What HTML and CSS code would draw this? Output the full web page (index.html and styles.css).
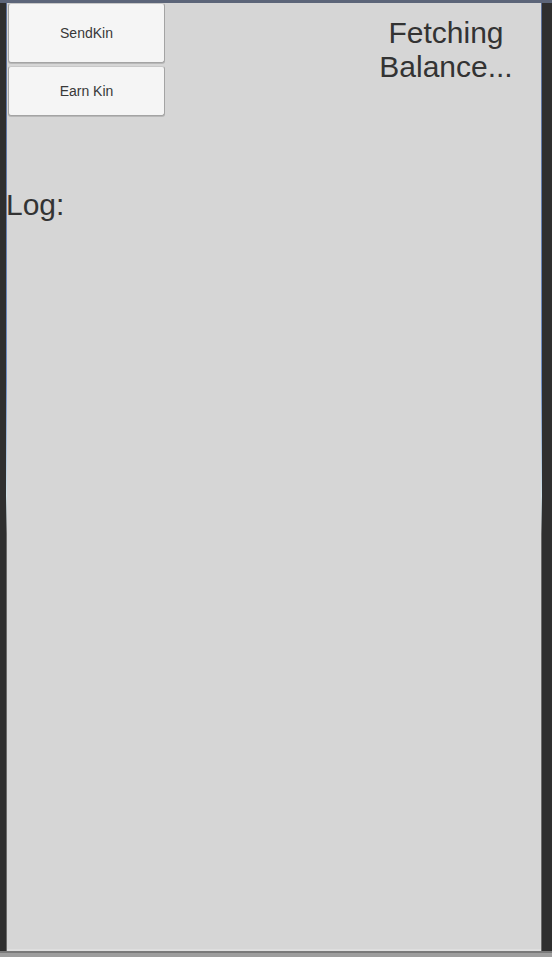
FILE: index.html
```html
<!DOCTYPE html>
<html>
<head>
<meta charset="utf-8">
<link rel="stylesheet" href="styles.css">
</head>
<body>
<div class="app">
  <div class="top-edge"></div>
  <div class="middle">
    <div class="side side-left"></div>
    <div class="edge"></div>
    <div class="panel">
      <div class="header">
        <div class="buttons">
          <button class="btn btn-send">SendKin</button>
          <button class="btn btn-earn">Earn Kin</button>
        </div>
        <div class="balance">Fetching<br>Balance...</div>
      </div>
      <div class="log">Log:</div>
    </div>
    <div class="edge"></div>
    <div class="side side-right"></div>
  </div>
  <div class="bottom-edge"></div>
</div>
</body>
</html>
```

FILE: styles.css
```css
html, body {
  margin: 0;
  padding: 0;
  background: #2f2f2f;
}
.app {
  width: 552px;
  height: 957px;
  display: flex;
  flex-direction: column;
  font-family: "Liberation Sans", Arial, sans-serif;
  color: #333333;
}
.top-edge {
  height: 3px;
  background: #5c6579;
  flex: none;
}
.middle {
  flex: 1;
  display: flex;
  min-height: 0;
}
.side-left {
  width: 6px;
  background: #2f2f2f;
}
.side-right {
  width: 10px;
  background: #2f2f2f;
}
.edge {
  width: 1px;
  background: linear-gradient(to bottom, #5a6e96 0%, #6e8ec4 40%, #cfe0e6 52%, #6a6a6a 56%, #6a6a6a 100%);
}
.panel {
  flex: 1;
  background: #d6d6d6;
  border-bottom: 2px solid #dedede;
  display: flex;
  flex-direction: column;
  overflow: visible;
}
.header {
  display: flex;
  justify-content: space-between;
  align-items: flex-start;
}
.buttons {
  display: flex;
  flex-direction: column;
  gap: 3px;
  padding-left: 1px;
}
.btn {
  width: 157px;
  margin: 0;
  padding: 0;
  background: #f5f5f5;
  border: 1px solid #a4a4a4;
  border-top-color: #c8c8c8;
  border-radius: 3px;
  font-family: "Liberation Sans", Arial, sans-serif;
  font-size: 14px;
  color: #383838;
  box-shadow: 0 1px 0 #b8b8b8;
}
.btn-send {
  height: 60px;
}
.btn-earn {
  height: 50px;
}
.balance {
  width: 190px;
  text-align: center;
  font-size: 30px;
  line-height: 34px;
  margin-top: 13px;
}
.log {
  font-size: 30px;
  line-height: 34px;
  margin-top: 72px;
  margin-left: -1px;
}
.bottom-edge {
  flex: none;
  height: 4px;
  background: #9e9e9e;
  border-top: 2px solid #7a7a7a;
}
```
